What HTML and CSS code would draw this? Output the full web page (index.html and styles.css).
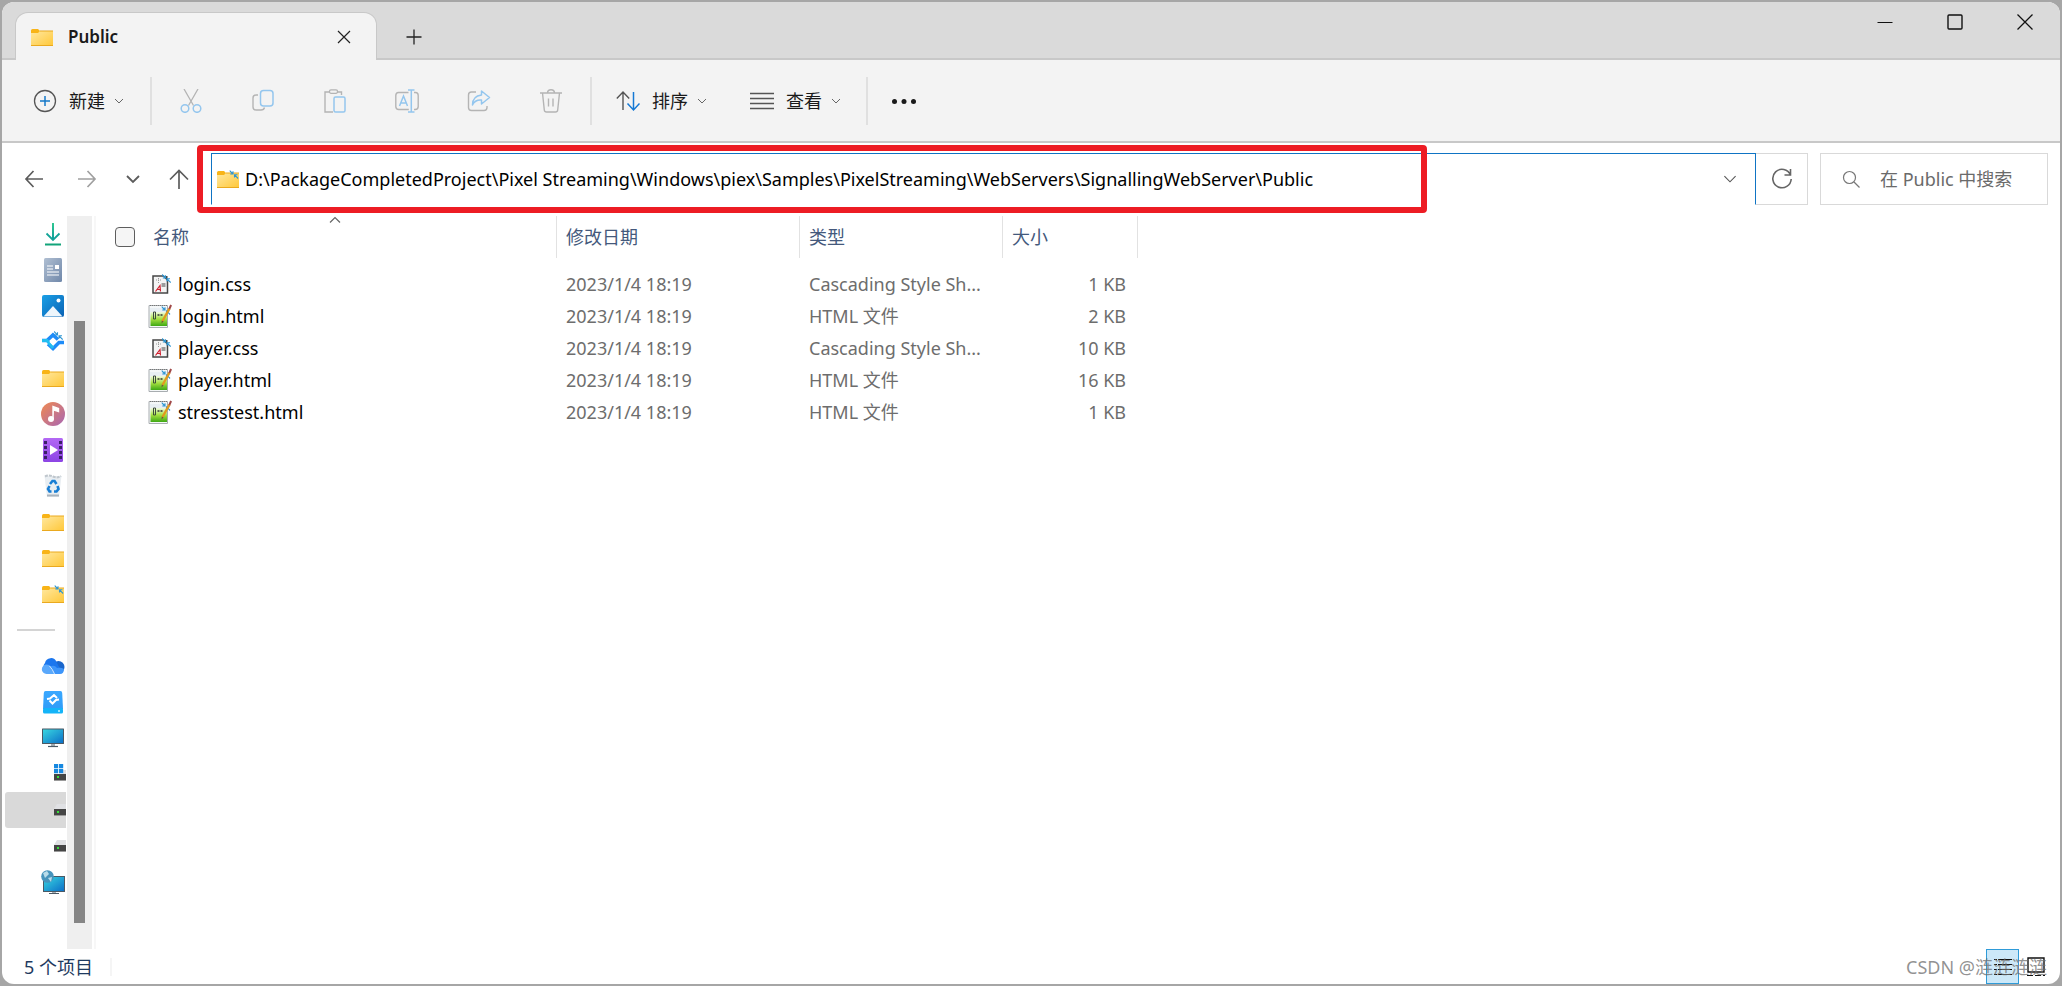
FILE: index.html
```
<!DOCTYPE html>
<html lang="zh-CN">
<head>
<meta charset="utf-8">
<title>Public</title>
<link rel="stylesheet" href="styles.css">
</head>
<body>
<svg width="0" height="0" class="defs" aria-hidden="true">
  <defs>
    <linearGradient id="gFolder" x1="0" y1="0" x2="1" y2="1"><stop offset="0" stop-color="#ffe8a0"/><stop offset="1" stop-color="#ffc83a"/></linearGradient>
    <linearGradient id="gDown" x1="0" y1="0" x2="0" y2="1"><stop offset="0" stop-color="#2fc890"/><stop offset="1" stop-color="#0f9e9c"/></linearGradient>
    <linearGradient id="gDoc" x1="0" y1="0" x2="1" y2="1"><stop offset="0" stop-color="#b0bfd2"/><stop offset="1" stop-color="#7088aa"/></linearGradient>
    <linearGradient id="gPic" x1="0" y1="0" x2="1" y2="1"><stop offset="0" stop-color="#1ba0e6"/><stop offset="1" stop-color="#0a62b4"/></linearGradient>
    <linearGradient id="gMusic" x1="0" y1="0" x2="1" y2="1"><stop offset="0" stop-color="#f08a50"/><stop offset="1" stop-color="#a866b4"/></linearGradient>
    <linearGradient id="gVideo" x1="0" y1="0" x2="0" y2="1"><stop offset="0" stop-color="#b368f4"/><stop offset="1" stop-color="#8c44e4"/></linearGradient>
    <linearGradient id="gScreen" x1="0" y1="0" x2="1" y2="1"><stop offset="0" stop-color="#38d6e0"/><stop offset="1" stop-color="#0c70c8"/></linearGradient>
    <linearGradient id="gGreen" x1="0" y1="0" x2="0" y2="1"><stop offset="0" stop-color="#f0fae0"/><stop offset=".5" stop-color="#a4e040"/><stop offset="1" stop-color="#3fa814"/></linearGradient>
    <linearGradient id="gBox" x1="0" y1="0" x2="0" y2="1"><stop offset="0" stop-color="#3aa8ff"/><stop offset="1" stop-color="#2f9cf8"/></linearGradient>
    <symbol id="folder" viewBox="0 0 24 24"><path d="M1 5.500Q1 4 2.500 4H8l2 2v3H1z" fill="#f8b418"/><path d="M1 8h7l2-2h13v14.500H1z" fill="url(#gFolder)"/><path d="M10 6h13M1 20.500h22" stroke="#eaa91f" fill="none"/></symbol>
    <symbol id="sync" viewBox="0 0 9 9"><path d="M0 .5l3.500 3.500M3.500 1.200V4H.8M8.700 8.500L5 4.800M8 4.800H5V7.600" fill="none" stroke="#2f96d2" stroke-width="1.100"/></symbol>
    <symbol id="folder-sync" viewBox="0 0 24 24"><use href="#folder" width="24" height="24"/><use href="#sync" x="13.500" y="3" width="9" height="9"/></symbol>
    <symbol id="drive" viewBox="0 0 12 12"><path d="M3 0h9v5H0z" fill="#e0e1e4"/><path d="M0 5h12v6H0z" fill="#454545"/><path d="M0 11.500h12" stroke="#9a9a9a"/><path d="M3 7h2v2H3z" fill="#36e038"/></symbol>
    <symbol id="chevron" viewBox="0 0 10 10"><path d="M1 3l4 4 4-4" fill="none" stroke="currentColor"/></symbol>
    <symbol id="css" viewBox="0 0 24 24"><path d="M5 4h10.500l4 4v13H5z" fill="#f4f4f4" stroke="#454545" stroke-width="1.500"/><path d="M15 4l4.500 4.500V4z" fill="#454545"/><path d="M8 8h5M10.500 6v6" stroke="#999" stroke-dasharray="1 1" fill="none"/><path d="M13.500 12h4M13.500 14h4" stroke="#444" fill="none"/><path d="M7.500 19.500l4.500-6 .5 6M9 17.500h3.500" stroke="#d02030" stroke-width="1.200" fill="none"/><use href="#sync" x="14" y="2" width="9" height="9"/></symbol>
    <symbol id="html" viewBox="0 0 24 24"><path d="M1 1.500h18.500v22H1z" fill="#f4f7f8" stroke="#a8adb0"/><path d="M2 5h17M2 7h17" stroke="#dce6ee"/><path d="M2.500 8h16.500v14h-16.500z" fill="url(#gGreen)"/><path d="M2 1.500h18" stroke="#777" stroke-dasharray="1 1"/><path d="M5.500 8v7M7.500 8v7M5.500 8h2M5.500 15h2" stroke="#3c4a3c" fill="none"/><path d="M9.500 11h5.500" stroke="#333" stroke-width="1.600" stroke-dasharray="2 1" fill="none"/><use href="#sync" x="13.500" y="2" width="9" height="9"/><path d="M14.500 17l7-12.500" stroke="#e29a1d" stroke-width="2.400"/><path d="M21.300 5l1.800-4" stroke="#a04848" stroke-width="2"/><path d="M13.500 19.500l.3-3 1.800 1z" fill="#6d563c"/></symbol>
  </defs>
</svg>

<div class="window">
  <header class="titlebar">
    <div class="tab">
      <svg class="i24"><use href="#folder"/></svg>
      <span class="tab-title">Public</span>
      <button class="icon-btn tab-close" aria-label="关闭标签页"><svg width="14" height="14" viewBox="0 0 14 14"><path d="M1 1l12 12M13 1L1 13" stroke="#222" stroke-width="1.200"/></svg></button>
    </div>
    <button class="icon-btn new-tab" aria-label="新标签页"><svg width="16" height="16" viewBox="0 0 16 16"><path d="M8 0.500v15M.5 8h15" stroke="#222" stroke-width="1.300"/></svg></button>
    <div class="window-controls">
      <button class="icon-btn" aria-label="最小化"><svg width="16" height="16" viewBox="0 0 16 16"><path d="M.5 8.500h15" stroke="#111"/></svg></button>
      <button class="icon-btn" aria-label="最大化"><svg width="16" height="16" viewBox="0 0 16 16"><rect x="1" y="1" width="14" height="14" rx="1" fill="none" stroke="#111" stroke-width="1.400"/></svg></button>
      <button class="icon-btn" aria-label="关闭"><svg width="16" height="16" viewBox="0 0 16 16"><path d="M.5 .5l15 15M15.500 .5l-15 15" stroke="#111" stroke-width="1.300"/></svg></button>
    </div>
  </header>

  <div class="toolbar">
    <button class="tool new">
      <svg class="i24" viewBox="0 0 24 24"><circle cx="12" cy="12" r="10.500" fill="none" stroke="#555" stroke-width="1.300"/><path d="M12 7v10M7 12h10" stroke="#1478c8" stroke-width="1.500"/></svg>
      <span>新建</span><svg class="chev"><use href="#chevron"/></svg>
    </button>
    <i class="sep"></i>
    <div class="tool-group">
      <button class="tool" aria-label="剪切" disabled><svg class="i24" viewBox="0 0 24 24" fill="none"><path d="M5 0l9.500 16.500M19 0L9.500 16.500" stroke="#b4b4b4" stroke-width="1.300"/><circle cx="6" cy="19.500" r="3.800" stroke="#94c6ee" stroke-width="1.500"/><circle cx="18" cy="19.500" r="3.800" stroke="#94c6ee" stroke-width="1.500"/></svg></button>
      <button class="tool" aria-label="复制" disabled><svg class="i24" viewBox="0 0 24 24" fill="none"><path d="M7 6H5Q2 6 2 9v9q0 3 3 3h5q3 0 3.500-2.500" stroke="#b4b4b4" stroke-width="1.400"/><rect x="9.500" y="1.500" width="12.500" height="15.500" rx="3" stroke="#94c6ee" stroke-width="1.500"/></svg></button>
      <button class="tool" aria-label="粘贴" disabled><svg class="i24" viewBox="0 0 24 24" fill="none"><path d="M7 3H2v20h8M14 3h4.500v3" stroke="#b4b4b4" stroke-width="1.400"/><rect x="6.500" y=".8" width="8" height="3.500" rx="1.500" stroke="#b4b4b4" stroke-width="1.300"/><rect x="11" y="8" width="11" height="15" rx="1.500" stroke="#94c6ee" stroke-width="1.500"/></svg></button>
      <button class="tool" aria-label="重命名" disabled><svg class="i24" viewBox="0 0 24 24" fill="none"><path d="M13.500 3.500H3.500Q.8 3.500.8 6.500v11q0 3 3 3h10M19 3.500h1.500q2.700 0 2.700 3v11q0 3-3 3H19" stroke="#b4b4b4" stroke-width="1.400"/><path d="M4.500 17L8.500 7l4 10M6 14h5M13 1h6.500M13 23h6.500M16.300 1v22" stroke="#94c6ee" stroke-width="1.500"/></svg></button>
      <button class="tool" aria-label="共享" disabled><svg class="i24" viewBox="0 0 24 24" fill="none"><path d="M9 3H4.500Q1.500 3 1.500 6v12.500q0 3 3 3h12.500q3 0 3-3V17" stroke="#b4b4b4" stroke-width="1.400"/><path d="M14.500 2l8 6.500-8 6.500v-4Q8 10.500 5.500 16 5.500 7 14.500 6z" stroke="#94c6ee" stroke-width="1.500" stroke-linejoin="round"/></svg></button>
      <button class="tool" aria-label="删除" disabled><svg class="i24" viewBox="0 0 24 24" fill="none" stroke="#b4b4b4" stroke-width="1.400"><path d="M1 4h22M8.500 4q0-3.200 3.500-3.200T15.500 4M3.500 4l1.800 17q.2 2 2.200 2h9q2 0 2.200-2l1.800-17M9.500 9.500v8M14 9.500v8"/></svg></button>
    </div>
    <i class="sep"></i>
    <div class="tool-menus">
      <button class="tool"><svg class="i24" viewBox="0 0 24 24" fill="none"><path d="M7 21V3M.8 9.500L7 3l6.200 6.500" stroke="#555" stroke-width="1.400"/><path d="M17.500 3v18M11.500 14.500l6 6.500 6-6.500" stroke="#1478d4" stroke-width="1.500"/></svg><span>排序</span><svg class="chev"><use href="#chevron"/></svg></button>
      <button class="tool"><svg class="i24" viewBox="0 0 24 24"><path d="M0 4.500h24M0 9.500h24M0 14.500h24M0 19.500h24" stroke="#555" stroke-width="1.300"/></svg><span>查看</span><svg class="chev"><use href="#chevron"/></svg></button>
    </div>
    <i class="sep"></i>
    <button class="tool more" aria-label="更多"><svg class="i24" viewBox="0 0 24 24" fill="#1a1a1a"><circle cx="2.500" cy="12.500" r="2.500"/><circle cx="12" cy="12.500" r="2.500"/><circle cx="21.500" cy="12.500" r="2.500"/></svg></button>
  </div>

  <div class="navbar">
    <nav class="history">
      <button class="icon-btn" aria-label="后退"><svg width="20" height="20" viewBox="0 0 20 20"><path d="M9.500 2L2 10l7.500 8M2 10h17" fill="none" stroke="#5c5c5c" stroke-width="1.700"/></svg></button>
      <button class="icon-btn" aria-label="前进"><svg width="20" height="20" viewBox="0 0 20 20"><path d="M10.500 2L18 10l-7.500 8M18 10H1" fill="none" stroke="#a0a0a0" stroke-width="1.700"/></svg></button>
      <button class="icon-btn narrow" aria-label="最近的位置"><svg width="14" height="14" viewBox="0 0 14 14"><path d="M1 4l6 6 6-6" fill="none" stroke="#5c5c5c" stroke-width="1.800"/></svg></button>
      <button class="icon-btn narrow" aria-label="向上"><svg width="20" height="20" viewBox="0 0 20 20"><path d="M1 10.500L10 1.500l9 9M10 2v18" fill="none" stroke="#5c5c5c" stroke-width="1.700"/></svg></button>
    </nav>
    <div class="address">
      <svg class="i24"><use href="#folder-sync"/></svg>
      <input type="text" aria-label="地址" value="D:\PackageCompletedProject\Pixel Streaming\Windows\piex\Samples\PixelStreaming\WebServers\SignallingWebServer\Public">
      <button class="icon-btn" aria-label="以前的位置"><svg width="14" height="14" viewBox="0 0 10 10"><path d="M1 3l4 4 4-4" fill="none" stroke="#555" stroke-width=".8"/></svg></button>
      <div class="highlight"></div>
    </div>
    <button class="refresh" aria-label="刷新"><svg width="24" height="24" viewBox="0 0 24 24" fill="none" stroke="#666" stroke-width="1.600"><path d="M20.500 8A9.200 9.200 0 1 0 21.200 12M20.500 2v6h-6"/></svg></button>
    <label class="search">
      <svg width="18" height="18" viewBox="0 0 18 18" fill="none" stroke="#777" stroke-width="1.200"><circle cx="7.500" cy="7.500" r="6"/><path d="M12 12l5.500 5.500"/></svg>
      <input type="search" aria-label="搜索" placeholder="在 Public 中搜索">
    </label>
  </div>

  <div class="content">
    <nav class="sidebar">
      <ul class="tree">
        <li><svg class="i24" viewBox="0 0 24 24"><path d="M5.500 11.500L12 18l6.500-6.500" fill="none" stroke="#14a498" stroke-width="1.800"/><path d="M11 1h2v16h-2z" fill="url(#gDown)"/><path d="M4 21.500h16v2H4z" fill="#12a47a"/></svg></li>
        <li><svg class="i24" viewBox="0 0 24 24"><rect x="3" width="18" height="24" rx="1.500" fill="url(#gDoc)"/><path d="M6 8h6M6 11h6M6 14h12M6 17h12" stroke="#fff" stroke-width="1.200"/><path d="M14 7h4v4h-4z" fill="#fff"/></svg></li>
        <li><svg class="i24" viewBox="0 0 24 24"><rect x="1" y="1" width="22" height="22" rx="2" fill="url(#gPic)"/><path d="M2.500 22.500L12 12l9.500 10.500z" fill="#eef6fc"/><circle cx="17.500" cy="6.500" r="2" fill="#fff"/></svg></li>
        <li><svg class="i24" viewBox="0 0 24 24"><path d="M1 10.500h5L12 5l5 4.500M23 12.500h-5l-6 6-5-4.500" fill="none" stroke="#1e8cf8" stroke-width="3.600"/><path d="M1 10.500h5L8 13l4 5" fill="none" stroke="#22bdf0" stroke-width="3"/><path d="M12 8.500l3.500 3.500-3.500 3.500L8.500 12z" fill="#fff"/><use href="#sync" x="13" y="1" width="9" height="9"/></svg></li>
        <li><svg class="i24"><use href="#folder"/></svg></li>
        <li><svg class="i24" viewBox="0 0 24 24"><circle cx="12" cy="12" r="12" fill="url(#gMusic)"/><circle cx="10" cy="17" r="3" fill="#fff"/><path d="M12 17V4.500l5.500 2v3L13 8" fill="#fff" stroke="#fff" stroke-width="1.400"/></svg></li>
        <li><svg class="i24" viewBox="0 0 24 24"><rect x="2" width="20" height="24" rx="1.500" fill="url(#gVideo)"/><path d="M4.500 3v19M19.500 3v19" stroke="#3a1f68" stroke-width="3" stroke-dasharray="3 2"/><path d="M9 7l8 5-8 5z" fill="#fff"/></svg></li>
        <li><svg class="i24" viewBox="0 0 24 24"><path d="M3.500 2h17l-2.500 21H6z" fill="#e9eef2"/><path d="M4 2.500q4-2 8 0t8-.5" fill="none" stroke="#bfc6cc" stroke-width="2" stroke-dasharray="3 1"/><path d="M6 21.500h12" stroke="#a9b4be" stroke-width="2"/><path d="M9 10l2.500-3h2l2 3M16.500 12l1 3-2 2.500H13M10.500 17.500H8.500L7 15l1.500-3" fill="none" stroke="#1a7fd4" stroke-width="2.600"/></svg></li>
        <li><svg class="i24"><use href="#folder"/></svg></li>
        <li><svg class="i24"><use href="#folder"/></svg></li>
        <li><svg class="i24"><use href="#folder-sync"/></svg></li>
        <li class="rule"><hr></li>
        <li><svg class="i24" viewBox="0 0 24 24"><circle cx="17.500" cy="13" r="6" fill="#1a66cc"/><path d="M5.500 17A5 5 0 0 1 4 9a6 6 0 0 1 11.500-1l2 4 3 5z" fill="#1b76ee"/><path d="M5.500 20a4.700 4.700 0 0 1 0-9.400q5.500 0 8 9.400z" fill="#5aa8fb"/><path d="M13 20q-1-4-4-7 4-3 7 1 4-1 7 1 0 5-4 5z" fill="#3d95fa"/><path d="M8.500 12q3 3 5 8" fill="none" stroke="#d2e8ff"/></svg></li>
        <li><svg class="i24" viewBox="0 0 24 24"><path d="M4.500 1h15Q21 1 21.200 3L22 19H2L2.800 3Q3 1 4.500 1z" fill="url(#gBox)"/><rect x="2" y="18" width="20" height="5.500" rx="1.500" fill="#14b4f8"/><path d="M6 9l3-.5 4-3.500 3 3M18 9.500l-3 .5-3.500 3.500-3-3" fill="none" stroke="#fff" stroke-width="2"/><circle cx="18" cy="21" r="1" fill="#c8f4ff"/></svg></li>
        <li><svg class="i24" viewBox="0 0 24 24"><rect x="1" y="2.500" width="22" height="15.500" rx=".5" fill="#4b5964"/><path d="M2 3.500h20V17H2z" fill="url(#gScreen)"/><path d="M10 18h4v2h-4z" fill="#a5adb3"/><path d="M7 20.500h10" stroke="#4b5964" stroke-width="1.200"/></svg></li>
        <li class="nested"><svg width="12" height="20" viewBox="0 0 12 20"><path d="M9 6h3v5H9z" fill="#e0e1e4"/><path d="M0 0h4.200v4.200H0zM5 0h4.200v4.200H5zM0 5h4.200v4.200H0zM5 5h4.200v4.200H5z" fill="#1688e0"/><path d="M0 10h12v6H0z" fill="#454545"/><path d="M0 16.500h12" stroke="#9a9a9a"/><path d="M3 12h2v2H3z" fill="#36e038"/></svg></li>
        <li class="nested selected"><svg width="12" height="12"><use href="#drive"/></svg></li>
        <li class="nested"><svg width="12" height="12"><use href="#drive"/></svg></li>
        <li><svg class="i24" viewBox="0 0 24 24"><rect x="2" y="6" width="22" height="16" fill="#4b5964"/><path d="M3 7h20v14H3z" fill="url(#gScreen)"/><path d="M11 22h4v1.500h-4z" fill="#a5adb3"/><path d="M8 23.500h10" stroke="#4b5964"/><circle cx="6.500" cy="6.500" r="6.300" fill="#4794bc"/><path d="M2 3l4-2 2 3-4 4zM7 8l4-1-1 5z" fill="#b9dcea"/></svg></li>
      </ul>
      <div class="scroll-track"><div class="scroll-thumb"></div></div>
    </nav>

    <main class="files">
      <table>
        <colgroup><col class="c-check"><col class="c-name"><col class="c-date"><col class="c-type"><col class="c-size"></colgroup>
        <thead>
          <tr>
            <th class="check"><input type="checkbox" aria-label="全选"></th>
            <th class="name">名称<svg class="sort" width="12" height="8" viewBox="0 0 12 8"><path d="M1 6.500l5-5 5 5" fill="none" stroke="#666" stroke-width="1.200"/></svg></th>
            <th>修改日期</th><th>类型</th><th>大小</th>
          </tr>
        </thead>
        <tbody>
          <tr><td></td><td><div class="file"><svg class="i24"><use href="#css"/></svg>login.css</div></td><td>2023/1/4 18:19</td><td>Cascading Style Sh...</td><td class="size">1 KB</td></tr>
          <tr><td></td><td><div class="file"><svg class="i24"><use href="#html"/></svg>login.html</div></td><td>2023/1/4 18:19</td><td>HTML 文件</td><td class="size">2 KB</td></tr>
          <tr><td></td><td><div class="file"><svg class="i24"><use href="#css"/></svg>player.css</div></td><td>2023/1/4 18:19</td><td>Cascading Style Sh...</td><td class="size">10 KB</td></tr>
          <tr><td></td><td><div class="file"><svg class="i24"><use href="#html"/></svg>player.html</div></td><td>2023/1/4 18:19</td><td>HTML 文件</td><td class="size">16 KB</td></tr>
          <tr><td></td><td><div class="file"><svg class="i24"><use href="#html"/></svg>stresstest.html</div></td><td>2023/1/4 18:19</td><td>HTML 文件</td><td class="size">1 KB</td></tr>
        </tbody>
      </table>
    </main>
  </div>

  <footer class="statusbar">
    <span class="count">5 个项目</span>
    <div class="views">
      <button class="view active" aria-label="详细信息"><svg width="18" height="18" viewBox="0 0 18 18"><path d="M0 1.500h3M4 1.500h14M0 6.500h3M4 6.500h14M0 11.500h3M4 11.500h14M0 16.500h3M4 16.500h14" stroke="#111"/></svg></button>
      <button class="view" aria-label="大图标"><svg width="18" height="20" viewBox="0 0 18 20"><path d="M1 1h16v14H1z" fill="none" stroke="#111" stroke-width="1.400"/><path d="M0 18.500h18" stroke="#111" stroke-dasharray="6 2"/></svg></button>
    </div>
    <span class="watermark">CSDN @涟涟涟涟</span>
  </footer>
</div>
</body>
</html>
```
FILE: styles.css
```
* { box-sizing: border-box; }
html, body { height: 100%; }
body {
  margin: 0;
  padding: 2px;
  background: #a6a6a6;
  color: #000;
  font: 18px/24px "Noto Sans", "Noto Sans CJK SC", sans-serif;
}
button, input { font: inherit; color: inherit; }
button { border: 0; padding: 0; background: none; }
svg { flex: none; display: block; }
.defs { position: absolute; }
.i24 { width: 24px; height: 24px; }
.icon-btn { display: flex; align-items: center; justify-content: center; width: 40px; height: 40px; }

.window {
  display: flex;
  flex-direction: column;
  height: 100%;
  background: #fff;
  border-radius: 12px;
  overflow: hidden;
}

.titlebar {
  display: flex;
  align-items: flex-end;
  height: 58px;
  padding-left: 14px;
  background: #dadada;
  box-shadow: inset 0 -2px #c8c8c8;
}
.tab {
  display: flex;
  align-items: center;
  width: 360px;
  height: 47px;
  padding: 0 12px 0 14px;
  background: #f3f3f3;
  border-radius: 12px 12px 0 0;
  box-shadow: 0 0 0 1px #c8c8c8;
  clip-path: inset(-2px -2px 0 -2px);
}
.tab-title { flex: 1; margin-left: 14px; font-size: 17px; font-weight: 600; color: #1a1a1a; }
.new-tab { margin: 0 18px 3px; }
.window-controls { display: flex; align-self: flex-start; gap: 30px; margin-left: auto; padding-right: 15px; }

.toolbar {
  display: flex;
  align-items: center;
  height: 83px;
  padding-left: 31px;
  background: #f3f3f3;
  border-bottom: 2px solid #c8c8c8;
  color: #1a1a1a;
}
.tool { display: flex; align-items: center; }
.tool span { margin: 0 9px 0 12px; }
.chev { width: 10px; height: 10px; color: #666; }
.new { margin-right: 26px; }
.sep { width: 2px; height: 48px; background: #e0e0e0; }
.tool-group { display: flex; gap: 48px; margin: 0 27px; }
.tool-menus { display: flex; gap: 43px; margin: 0 25px 0 24px; }
.more { margin-left: 24px; }

.navbar { display: flex; align-items: center; padding: 10px 12px 11px 5px; }
.history { display: flex; align-items: center; width: 204px; }
.history .icon-btn { width: 53px; }
.history .narrow { width: 40px; margin-right: 6px; }
.address {
  position: relative;
  display: flex;
  align-items: center;
  flex: 1;
  height: 52px;
  padding: 0 0 0 4px;
  border: 1px solid #0f74c4;
  border-bottom-color: #fff;
}
.address input { flex: 1; min-width: 0; margin-left: 5px; padding: 0; border: 0; outline: 0; background: none; }
.address .icon-btn { width: 50px; color: #555; }
.highlight {
  position: absolute;
  top: -9px;
  right: 328px;
  bottom: -9px;
  left: -15px;
  border: 6px solid #ed1c24;
  border-radius: 4px;
  pointer-events: none;
}
.refresh { display: flex; align-items: center; justify-content: center; width: 52px; height: 52px; border: 1px solid #d9d9d9; border-left: 0; }
.search { display: flex; align-items: center; width: 228px; height: 52px; margin-left: 12px; padding-left: 21px; border: 1px solid #d9d9d9; }
.search input { flex: 1; min-width: 0; margin-left: 20px; padding: 0; border: 0; outline: 0; background: none; appearance: none; }
.search input::placeholder { color: #6a6a6a; opacity: 1; }

.content { display: flex; flex: 1; min-height: 0; }
.sidebar { display: flex; width: 94px; border-right: 2px solid #f7f7f7; }
.tree { flex: 1; margin: 0; padding: 0; list-style: none; }
.tree li { display: flex; align-items: center; justify-content: flex-end; height: 36px; margin: 0 1px 0 3px; padding-right: 1px; }
.tree .nested { padding-right: 0; }
.tree .selected { background: #d9d9d9; border-radius: 3px 0 0 3px; }
.tree .rule { justify-content: flex-start; padding-left: 12px; }
.tree hr { width: 38px; height: 2px; margin: 0; border: 0; background: #d4d4d4; }
.scroll-track { width: 25px; margin-right: 2px; padding: 105px 7px 26px; background: #efefef; }
.scroll-thumb { height: 100%; background: #858585; }

.files { flex: 1; }
table { table-layout: fixed; width: 1042px; border-collapse: separate; border-spacing: 0; }
.c-check { width: 48px; }
.c-name { width: 413px; }
.c-date { width: 243px; }
.c-type { width: 203px; }
.c-size { width: 135px; }
th { height: 42px; padding: 0 0 0 9px; text-align: left; font-weight: 400; color: #44597c; border-right: 1px solid #e2e2e2; }
th.check { padding: 0 0 0 19px; border: 0; }
th.name { position: relative; }
.sort { position: absolute; top: 0; left: 185px; }
th input { appearance: none; display: block; width: 20px; height: 20px; margin: 0; border: 1px solid #5e5e5e; border-radius: 4px; background: #f5f5f5; }
tbody::before { content: ""; display: table-row; height: 10px; }
td { height: 32px; padding: 0 0 0 9px; color: #6d6d6d; white-space: nowrap; }
td:nth-child(2) { padding-left: 4px; }
.file { display: flex; align-items: center; gap: 6px; color: #000; }
td.size { padding-right: 12px; text-align: right; }

.statusbar { position: relative; display: flex; align-items: center; height: 35px; padding-left: 22px; }
.count { padding-right: 17px; line-height: 18px; border-right: 2px solid #f5f5f5; color: #1e3a60; }
.views { display: flex; align-self: stretch; margin-left: auto; padding-right: 8px; }
.view { display: flex; align-items: center; justify-content: center; width: 33px; height: 35px; }
.view.active { background: #cce8f8; border: 1px solid #2f9bd8; }
.watermark { position: absolute; right: 13px; bottom: 5px; color: rgba(110, 110, 110, .75); pointer-events: none; }
```
